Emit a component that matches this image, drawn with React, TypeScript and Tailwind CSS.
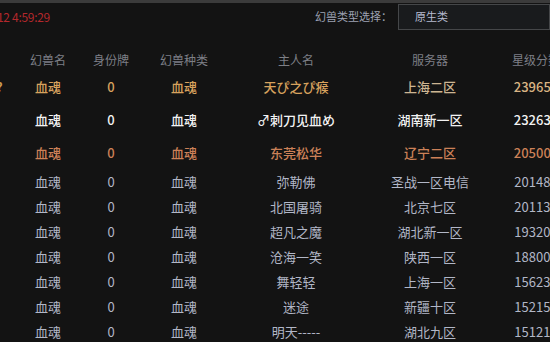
const rows = [
  { name: "天ぴ之ぴ瘊", server: "上海二区", score: "239658", tone: "gold" },
  { name: "♂刺刀见血め", server: "湖南新一区", score: "232634", tone: "white" },
  { name: "东莞松华", server: "辽宁二区", score: "205001", tone: "copper" },
  { name: "弥勒佛", server: "圣战一区电信", score: "201486", tone: "grey" },
  { name: "北国屠骑", server: "北京七区", score: "201139", tone: "grey" },
  { name: "超凡之魔", server: "湖北新一区", score: "193201", tone: "grey" },
  { name: "沧海一笑", server: "陕西一区", score: "188001", tone: "grey" },
  { name: "舞轻轻", server: "上海一区", score: "156232", tone: "grey" },
  { name: "迷途", server: "新疆十区", score: "152154", tone: "grey" },
  { name: "明天-----", server: "湖北九区", score: "151210", tone: "grey" },
];

const toneClass: Record<string, string> = {
  gold: "text-[#d7a25e] h-[33px] font-medium",
  white: "text-[#f2f2f2] font-medium h-[33px]",
  copper: "text-[#cc8158] h-[33px] font-medium",
  grey: "text-[#b2b7c7] h-[25px]",
};

const cols = "grid grid-cols-[14px_68px_58px_88px_136px_132px_80px] w-[576px] items-center text-center";

export default function App() {
  return (
    <div
      className="w-[550px] h-[342px] overflow-hidden bg-[#131313] text-[13px]"
      style={{ fontFamily: '"Noto Sans CJK SC", "Noto Sans", sans-serif' }}
    >
      {/* top strip */}
      <div className="h-[3px] bg-[#3b3b3b]" />

      {/* toolbar */}
      <div className="flex items-center h-[27px]">
        <span className="text-[#b3282c] text-[12px] -ml-[3px] tracking-tight">12 4:59:29</span>
        <span className="ml-auto text-[11px] text-[#9ea3b4]">幻兽类型选择：</span>
        <div className="ml-[6px] w-[152px] h-[26px] border border-[#454749] bg-[#191b1d] flex items-center pl-[16px] text-[11px] text-[#b6bbd0]">
          原生类
        </div>
      </div>

      {/* header */}
      <div className={`${cols} h-[40px] pt-[20px] text-[#7d7f86] text-[12px]`}>
        <span />
        <span>幻兽名</span>
        <span>身份牌</span>
        <span>幻兽种类</span>
        <span>主人名</span>
        <span>服务器</span>
        <span>星级分数</span>
      </div>

      {/* rows */}
      <div>
        {rows.map((r, i) => (
          <div key={i} className={`${cols} ${toneClass[r.tone]}`}>
            <span className="text-left -ml-[4px] text-[#c99a52] font-bold">{i === 0 ? "?" : ""}</span>
            <span>血魂</span>
            <span>0</span>
            <span>血魂</span>
            <span>{r.name}</span>
            <span className={r.tone === "gold" ? "text-[#cdb592]" : ""}>{r.server}</span>
            <span className={r.tone === "gold" ? "text-[#d9b383]" : ""}>{r.score}</span>
          </div>
        ))}
      </div>
    </div>
  );
}
